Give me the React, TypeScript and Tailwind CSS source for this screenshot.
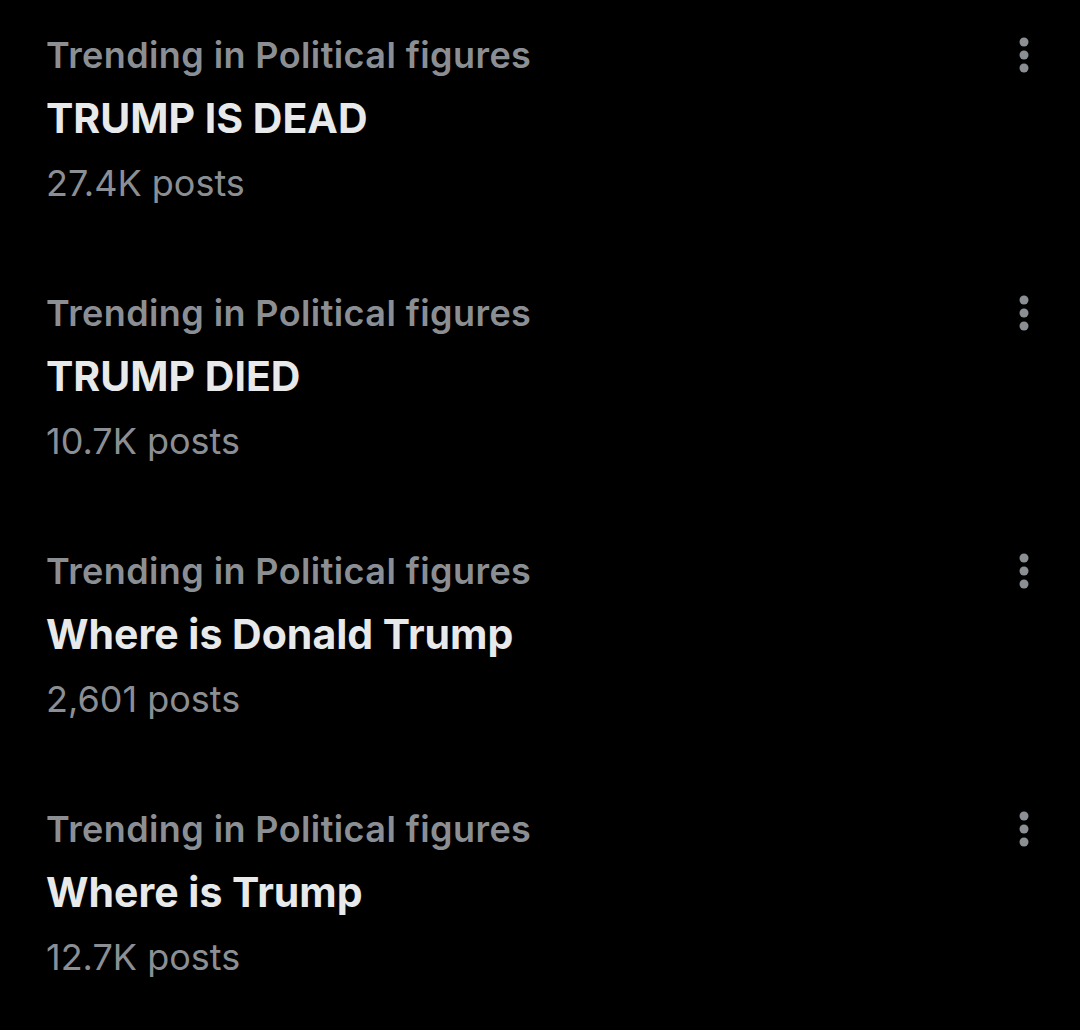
const TRENDS = [
  { title: 'TRUMP IS DEAD', posts: '27.4K posts' },
  { title: 'TRUMP DIED', posts: '10.7K posts' },
  { title: 'Where is Donald Trump', posts: '2,601 posts' },
  { title: 'Where is Trump', posts: '12.7K posts' },
]

function MoreIcon() {
  return (
    <svg width="12" height="36" viewBox="0 0 12 36" className="text-[#8b8e92]">
      <circle cx="6" cy="5" r="4.5" fill="currentColor" />
      <circle cx="6" cy="18" r="4.5" fill="currentColor" />
      <circle cx="6" cy="31" r="4.5" fill="currentColor" />
    </svg>
  )
}

export default function App() {
  return (
    <main
      className="w-[1080px] h-[1030px] bg-black overflow-hidden pt-[23px] pl-[46px] pr-[50px]"
      style={{ fontFamily: 'Inter, "Noto Sans", sans-serif' }}
    >
      <div className="flex flex-col gap-[66px]">
        {TRENDS.map((t) => (
          <div key={t.title} className="flex justify-between">
            <div className="flex flex-col">
              <div className="h-[64px] flex items-center text-[36px] font-semibold text-[#8b8f94] tracking-[0.4px]">
                Trending in Political figures
              </div>
              <div className="h-[64px] flex items-center text-[41px] font-bold text-[#e7e9ea]">
                {t.title}
              </div>
              <div className="h-[64px] flex items-center text-[36px] text-[#8b8f94]">
                {t.posts}
              </div>
            </div>
            <div className="pt-[14px]">
              <MoreIcon />
            </div>
          </div>
        ))}
      </div>
    </main>
  )
}
